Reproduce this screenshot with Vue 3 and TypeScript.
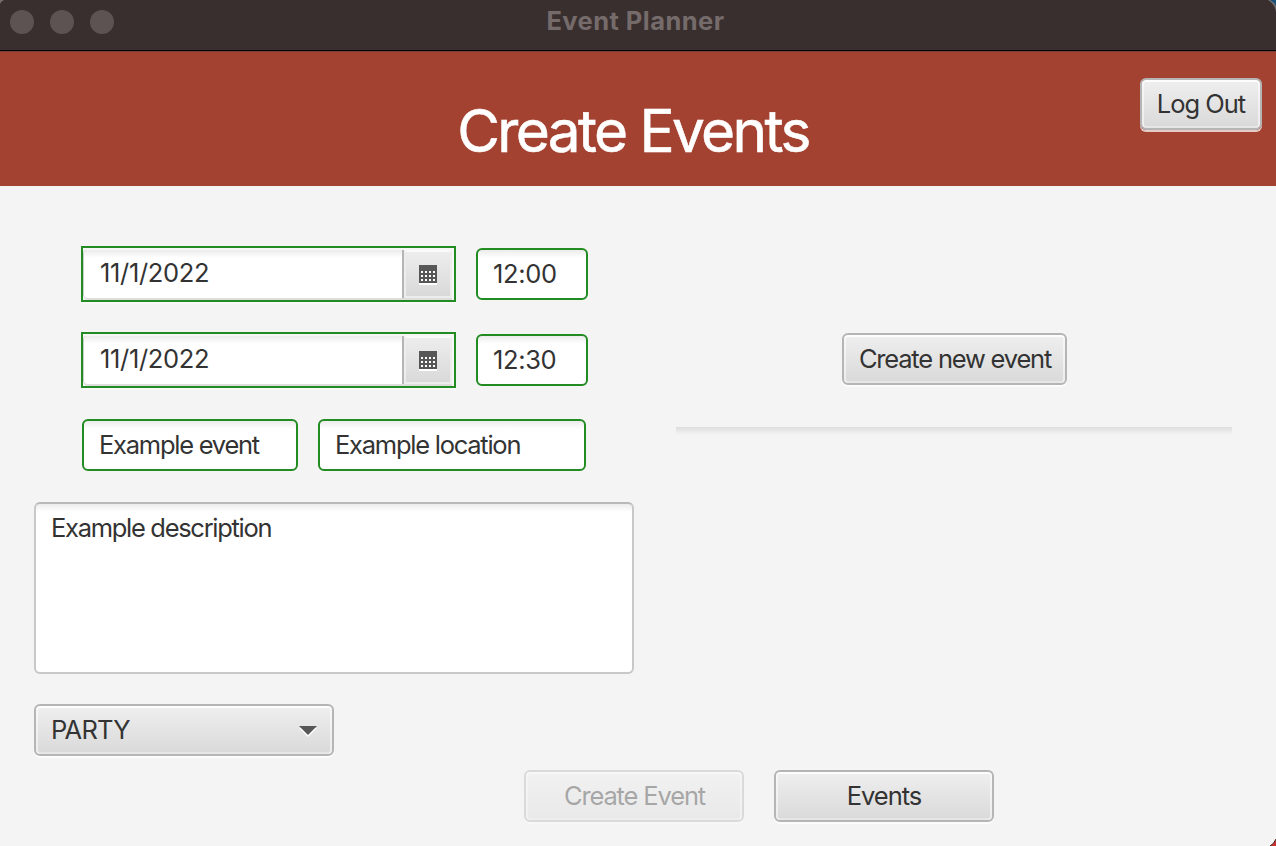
<script setup lang="ts">
interface Slot {
  id: string
  date: string
  time: string
}

const slots: Slot[] = [
  { id: 'start', date: '11/1/2022', time: '12:00' },
  { id: 'end', date: '11/1/2022', time: '12:30' },
]
const holes = [0, 1, 2].flatMap((r) => [0, 1, 2, 3].map((c) => ({ x: 2 + c * 4, y: 6 + r * 4 })))
</script>

<template>
  <div class="window">
    <div class="titlebar">
      <div class="lights"><i></i><i></i><i></i></div>
      <span class="caption">Event Planner</span>
    </div>
    <header class="header">
      <h1>Create Events</h1>
      <button class="btn logout"><span>Log Out</span></button>
    </header>
    <main class="body">
      <section class="form">
        <div v-for="s in slots" :key="s.id" class="row slot">
          <div class="picker">
            <div class="date"><span>{{ s.date }}</span></div>
            <div class="cal">
              <svg width="18" height="20" viewBox="0 0 18 20" shape-rendering="crispEdges">
                <rect y="2" width="18" height="18" fill="#fff" />
                <rect width="18" height="18" fill="#575757" />
                <rect v-for="(h, i) in holes" :key="i" :x="h.x" :y="h.y" width="2" height="2" fill="#fff" />
              </svg>
            </div>
          </div>
          <div class="field time"><span>{{ s.time }}</span></div>
        </div>
        <div class="row names">
          <div class="field event"><span>Example event</span></div>
          <div class="field location"><span>Example location</span></div>
        </div>
        <div class="area"><span>Example description</span></div>
        <div class="btn combo">
          <span>PARTY</span>
          <svg width="18" height="12" viewBox="0 0 18 12">
            <path d="M0 2h18l-9 9z" fill="#fff" />
            <path d="M0 0h18l-9 9z" fill="#575757" />
          </svg>
        </div>
      </section>
      <section class="side">
        <button class="btn new"><span>Create new event</span></button>
        <div class="pane"></div>
      </section>
    </main>
    <footer class="actions">
      <button class="btn create" disabled><span>Create Event</span></button>
      <button class="btn events"><span>Events</span></button>
    </footer>
    <svg class="corner tl" width="4" height="4"><path d="M0 0h4Q1 1 0 4z" fill="#777071" /></svg>
    <svg class="corner tr" width="8" height="12">
      <path d="M0 0H8V12Q7 4 0 0z" fill="#777071" />
      <path d="M2 0H8V6Q6 2 2 0z" fill="#175079" />
    </svg>
    <svg class="corner br" width="6" height="7">
      <path d="M6 0V7H0Q4 5 6 0z" fill="#c8322d" />
      <path d="M0 7Q4 5 6 0" fill="none" stroke="#432020" />
    </svg>
  </div>
</template>

<style>
body {
  margin: 0;
  overflow: hidden;
}
</style>

<style scoped>
.window {
  position: relative;
  width: 1276px;
  height: 846px;
  overflow: hidden;
  background: #f4f4f4;
  color: #333;
  font-family: Inter, 'Liberation Sans', sans-serif;
  font-size: 25.5px;
  line-height: 32px;
}
.window * {
  box-sizing: border-box;
}
span {
  white-space: nowrap;
}
.titlebar {
  display: grid;
  grid-template-columns: 1fr auto 1fr;
  height: 51px;
  padding: 0 6px 0 10px;
  background: #3a2f2f;
  border-bottom: 1px solid #000;
}
.lights {
  display: flex;
  gap: 16px;
  padding-top: 10px;
}
.lights i {
  width: 24px;
  height: 24px;
  border-radius: 50%;
  background: #5e5353;
}
.caption {
  padding: 5px 9px 0 0;
  color: #756b6b;
  font-size: 25.5px;
  font-weight: 700;
  letter-spacing: 0.45px;
}
.header {
  display: grid;
  grid-template-columns: 1fr auto 1fr;
  height: 135px;
  background: #a34231;
  border-top: 1px solid #794036;
}
h1 {
  grid-column: 2;
  margin: 43px 0 0;
  padding-right: 10px;
  color: #fff;
  font-size: 58.5px;
  font-weight: 400;
  line-height: 72px;
  letter-spacing: -2.6px;
  white-space: nowrap;
  -webkit-text-stroke: 0.6px #fff;
}
.btn {
  display: flex;
  align-items: center;
  justify-content: center;
  height: 52px;
  margin: 0;
  padding: 0;
  border: 2px solid #b5b5b5;
  border-radius: 6px;
  background: linear-gradient(#efefef, #d9d9d9) padding-box;
  box-shadow: 0 2px 0 rgba(255, 255, 255, 0.73), inset 0 2px 0 #fdfdfd, inset 2px 0 0 rgba(255, 255, 255, 0.5),
    inset -2px 0 0 rgba(255, 255, 255, 0.5), inset 0 -2px 0 rgba(255, 255, 255, 0.35);
  color: #333;
  font: inherit;
  letter-spacing: -1px;
}
.logout {
  justify-self: end;
  width: 122px;
  margin: 26px 14px 0 0;
}
.body {
  display: flex;
  height: 570px;
  padding: 60px 44px 0 34px;
}
.form {
  display: flex;
  flex-direction: column;
  width: 600px;
  margin-right: 42px;
}
.row {
  display: flex;
  align-items: center;
  gap: 20px;
}
.slot {
  height: 56px;
  margin: 0 0 30px 47px;
}
.picker {
  display: flex;
  width: 375px;
  height: 56px;
  padding: 2px 0;
  border: 2px solid #228b22;
  background: #f6f6f6;
  box-shadow: 0 2px 0 #f8f8f8;
}
.date {
  display: flex;
  align-items: center;
  width: 320px;
  margin-left: 1px;
  border: solid #b5b5b5;
  border-width: 0 2px 0 0;
  border-bottom-left-radius: 4px;
  border-top-left-radius: 4px;
  padding: 0 0 2px 16px;
  background: linear-gradient(#ececec, #fff 8px);
  box-shadow: 0 2px 0 #ddd, -1px 0 0 #ccc;
  letter-spacing: -0.35px;
}
.cal {
  display: flex;
  align-items: center;
  justify-content: center;
  width: 48px;
  padding-top: 2px;
  border: 2px solid #ededed;
  border-top-color: #fafafa;
  background: linear-gradient(#ededed, #d9d9d9);
  box-shadow: 0 2px 0 #ddd;
}
.field {
  display: flex;
  align-items: center;
  height: 52px;
  padding-left: 15px;
  border: 2px solid #228b22;
  border-radius: 6px;
  background: linear-gradient(#ececec, #fff 8px);
  letter-spacing: -1.25px;
}
.time {
  width: 112px;
  letter-spacing: -0.35px;
}
.names {
  margin: 1px 0 31px 48px;
}
.event {
  width: 216px;
}
.location {
  width: 268px;
}
.area {
  height: 172px;
  padding: 8px 15px;
  border: 2px solid #c8c8c8;
  border-top-color: #b8b8b8;
  border-radius: 6px;
  background: linear-gradient(#ececec, #fff 8px);
  letter-spacing: -1.3px;
}
.combo {
  justify-content: space-between;
  width: 300px;
  margin-top: 30px;
  padding: 0 15px;
  letter-spacing: -0.8px;
}
.combo svg {
  margin-top: 3px;
}
.side {
  width: 556px;
  padding-top: 87px;
}
.new {
  width: 225px;
  margin-left: 166px;
  padding-left: 1px;
  letter-spacing: -1.2px;
}
.pane {
  height: 242px;
  margin-top: 42px;
  background: linear-gradient(#dedede, #f4f4f4 8px);
}
.actions {
  display: flex;
  gap: 30px;
  padding: 14px 0 0 524px;
}
.actions .btn {
  width: 220px;
}
.create {
  padding-left: 1px;
  opacity: 0.4;
  letter-spacing: -1.15px;
}
.corner {
  position: absolute;
}
.tl {
  top: 0;
  left: 0;
}
.tr {
  top: 0;
  right: 0;
}
.br {
  right: 0;
  bottom: 0;
}
</style>
